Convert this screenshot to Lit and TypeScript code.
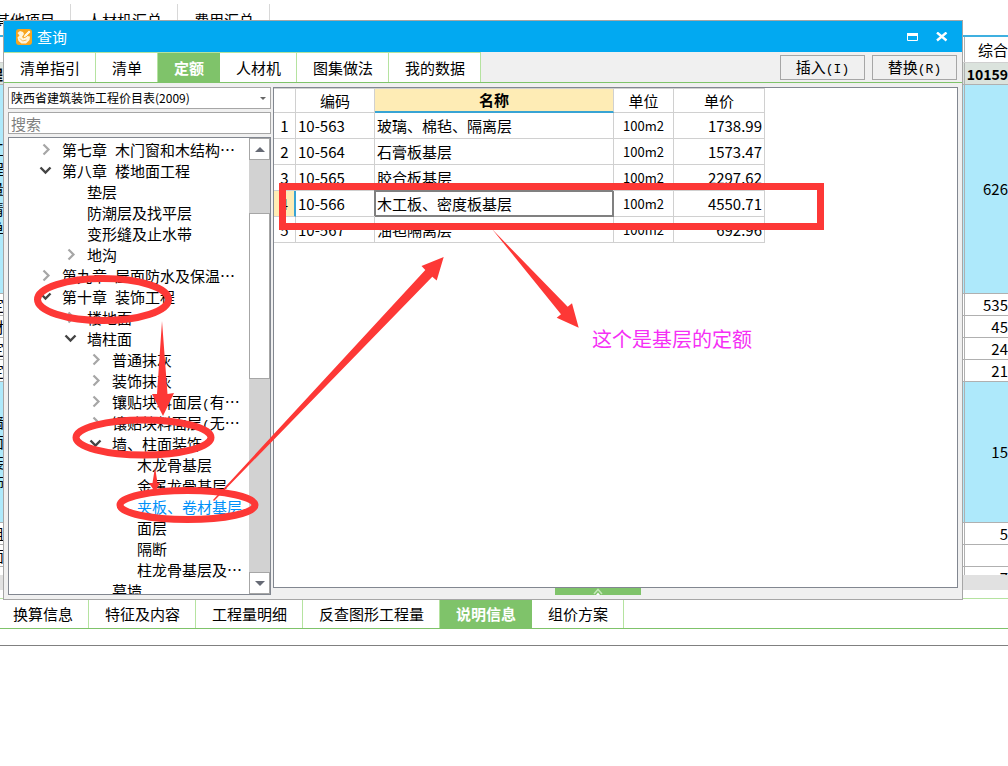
import { LitElement, html, css, svg, nothing } from "lit";
import { customElement, state } from "lit/decorators.js";
import { classMap } from "lit/directives/class-map.js";

interface Node {
  level: number;
  icon?: "open" | "closed";
  chapter?: string;
  text: string;
  latin?: string;
  rest?: string;
}

const TREE: Node[] = [
  { level: 1, icon: "closed", chapter: "第七章", text: "木门窗和木结构…" },
  { level: 1, icon: "open", chapter: "第八章", text: "楼地面工程" },
  { level: 2, text: "垫层" },
  { level: 2, text: "防潮层及找平层" },
  { level: 2, text: "变形缝及止水带" },
  { level: 2, icon: "closed", text: "地沟" },
  { level: 1, icon: "closed", chapter: "第九章", text: "屋面防水及保温…" },
  { level: 1, icon: "open", chapter: "第十章", text: "装饰工程" },
  { level: 2, icon: "closed", text: "楼地面" },
  { level: 2, icon: "open", text: "墙柱面" },
  { level: 3, icon: "closed", text: "普通抹灰" },
  { level: 3, icon: "closed", text: "装饰抹灰" },
  { level: 3, icon: "closed", text: "镶贴块料面层", latin: "(", rest: "有…" },
  { level: 3, icon: "closed", text: "镶贴块料面层", latin: "(", rest: "无…" },
  { level: 3, icon: "open", text: "墙、柱面装饰" },
  { level: 4, text: "木龙骨基层" },
  { level: 4, text: "金属龙骨基层" },
  { level: 4, text: "夹板、卷材基层" },
  { level: 4, text: "面层" },
  { level: 4, text: "隔断" },
  { level: 4, text: "柱龙骨基层及…" },
  { level: 3, text: "幕墙" },
];

const ITEMS = [
  ["10-563", "玻璃、棉毡、隔离层", "100m2", "1738.99"],
  ["10-564", "石膏板基层", "100m2", "1573.47"],
  ["10-565", "胶合板基层", "100m2", "2297.62"],
  ["10-566", "木工板、密度板基层", "100m2", "4550.71"],
  ["10-567", "油毡隔离层", "100m2", "692.96"],
];

const SHEET = [
  { kind: "head", left: "", right: "综合" },
  { kind: "sum", left: "程", right: "10159" },
  { kind: "tall", left: "工程量清单", right: "626" },
  { kind: "", left: "定", right: "535" },
  { kind: "", left: "材", right: "45" },
  { kind: "", left: "定", right: "24" },
  { kind: "", left: "定", right: "21" },
  { kind: "mid", left: "墙面装饰", right: "15" },
  { kind: "", left: "组", right: "5" },
  { kind: "", left: "面", right: "" },
  { kind: "cut", left: "", right: "7" },
];

@customElement("tab-strip")
export class TabStrip extends LitElement {
  static properties = { tabs: { attribute: false }, active: { type: Number } };
  declare tabs: string[];
  declare active: number;

  constructor() {
    super();
    this.tabs = [];
    this.active = -1;
  }

  static styles = css`
    :host {
      display: flex;
    }
    .tab {
      box-sizing: border-box;
      margin: 0;
      padding: 0 15px 0 16px;
      border: 0;
      border-right: 1px solid var(--divider, #b5e3a0);
      background: #fff;
      color: #000;
      font: inherit;
      white-space: nowrap;
    }
    .active {
      background: #7fc36a;
      color: #fff;
      font-weight: bold;
      border-right-color: #7fc36a;
    }
  `;

  render() {
    return this.tabs.map(
      (t, i) => html`<button
        class=${classMap({ tab: true, active: i === this.active })}
        @click=${() => (this.active = i)}
      >${t}</button>`
    );
  }
}

@customElement("app-root")
export class AppRoot extends LitElement {
  @state() private selectedNode = 17;
  @state() private selectedRow = 3;

  static styles = css`
    :host {
      display: block;
      position: relative;
      min-height: 100vh;
      overflow: hidden;
      background: #fff;
      color: #000;
      font: 15px/20px "Noto Sans CJK SC", sans-serif;
    }
    * {
      box-sizing: border-box;
    }
    .mono {
      font-family: "Liberation Mono", monospace;
      font-size: 13px;
      line-height: 1;
    }

    /* page behind the dialog */
    .top-tabs {
      --divider: #d8d8d8;
      height: 31px;
      margin: 4px 0 0 -21px;
    }
    .sheet {
      border-top: 2px solid #3fb0e0;
      height: 563px;
    }
    .line {
      display: flex;
      justify-content: space-between;
      height: 22px;
      border-bottom: 1px solid #b0b0b0;
      background: #fff;
    }
    .line.head {
      height: 26px;
      border-color: #d0d0d0;
    }
    .line.sum {
      background: #dbe3dd;
      font-size: 14px;
      font-weight: bold;
    }
    .line.tall,
    .line.mid {
      background: #aee9fb;
    }
    .line.tall {
      height: 209px;
    }
    .line.mid {
      height: 141px;
    }
    .line.cut {
      height: 8px;
      border: 0;
      overflow: hidden;
    }
    .left,
    .right {
      display: flex;
      align-items: center;
      justify-content: flex-end;
      overflow: hidden;
    }
    .left {
      width: 4px;
    }
    .left span {
      width: 15px;
      flex: none;
      overflow-wrap: anywhere;
    }
    .right {
      width: 44px;
      border-left: 1px solid #b0b0b0;
    }
    .cut .right {
      align-items: flex-start;
      padding-top: 1px;
    }
    .hscroll {
      height: 15px;
      background: #e1e1e1;
    }
    .bottom-tabs {
      height: 31px;
      border-top: 1px solid #b5e3a0;
      border-bottom: 1px solid #7fc36a;
    }
    .bottom-tabs tab-strip {
      height: 29px;
      margin-left: -3px;
    }
    .detail {
      margin-top: 16px;
      border-top: 1px solid #808080;
    }

    /* dialog */
    .dialog {
      position: absolute;
      left: 3px;
      right: 45px;
      top: 20px;
      height: 580px;
      display: flex;
      flex-direction: column;
      border: 1px solid #a6a6a6;
      background: #f0f0f0;
    }
    .title {
      display: flex;
      align-items: center;
      gap: 5px;
      height: 31px;
      padding: 0 14px 0 12px;
      background: #02a9f1;
      color: #fff;
    }
    .title h1 {
      flex: 1;
      margin: 0;
      font-size: 15px;
      font-weight: normal;
    }
    .title button {
      display: flex;
      margin: 0 0 0 12px;
      padding: 0;
      border: 0;
      background: none;
    }
    .bar {
      display: flex;
      align-items: center;
      gap: 7px;
      height: 31px;
      padding-right: 5px;
      border-bottom: 1px solid #7fc36a;
    }
    .bar tab-strip {
      align-self: stretch;
      margin-right: auto;
      border-top: 1px solid #b5e3a0;
    }
    .push {
      width: 85px;
      height: 25px;
      padding: 0;
      border: 1px solid #a6a6a6;
      background: #f0f0f0;
      color: #000;
      font: inherit;
      line-height: 20px;
    }
    .body {
      flex: 1;
      min-height: 0;
      display: flex;
      gap: 2px;
      padding: 4px;
    }
    .side {
      width: 263px;
      display: flex;
      flex-direction: column;
      gap: 3px;
    }
    .combo {
      display: grid;
      align-items: center;
    }
    .combo > * {
      grid-area: 1 / 1;
    }
    .combo svg {
      justify-self: end;
      margin-right: 5px;
      pointer-events: none;
    }
    .field {
      width: 100%;
      height: 22px;
      margin: 0;
      padding: 0 2px;
      border: 1px solid #a6a6a6;
      border-radius: 0;
      background: #fff;
      color: #000;
      font: inherit;
      appearance: none;
      outline: 0;
    }
    select.field {
      font-size: 12px;
    }
    .field::placeholder {
      color: #808080;
      opacity: 1;
    }
    .tree {
      flex: 1;
      min-height: 0;
      display: flex;
      border: 1px solid #828790;
      background: #fff;
    }
    .nodes {
      flex: 1;
      min-width: 0;
      margin: 0;
      padding: 1px 0 0;
      overflow: hidden;
      list-style: none;
    }
    .node {
      display: flex;
      align-items: center;
      height: 21px;
      white-space: nowrap;
    }
    .l1 {
      padding-left: 30px;
    }
    .l2 {
      padding-left: 55px;
    }
    .l3 {
      padding-left: 80px;
    }
    .l4 {
      padding-left: 105px;
    }
    .twist {
      flex: none;
      width: 14px;
      height: 14px;
      margin-right: 9px;
    }
    .chapter {
      margin-right: 8px;
    }
    .chosen {
      color: #0090f8;
    }
    .scroll {
      width: 21px;
      display: flex;
      flex-direction: column;
      background: #d2d2d2;
    }
    .arrow {
      height: 22px;
      padding: 0;
      border: 1px solid #a6a6a6;
      background: #fff;
      display: flex;
      align-items: center;
      justify-content: center;
    }
    .thumb {
      height: 166px;
      margin: 53px 0 auto;
      border: 1px solid #a6a6a6;
      background: #fff;
    }
    .main {
      flex: 1;
      min-width: 0;
      display: flex;
      flex-direction: column;
    }
    .pane {
      height: 501px;
      border: 1px solid #828790;
      background: #fff;
    }
    .handle {
      width: 86px;
      height: 7px;
      margin-left: 282px;
      padding: 0;
      border: 0;
      background: #7fc36a;
      display: flex;
      justify-content: center;
    }
    .items {
      width: 491px;
      table-layout: fixed;
      border-collapse: separate;
      border-spacing: 0;
    }
    .items th,
    .items td {
      height: 26px;
      padding: 0 2px;
      border: 0 solid #d0d0d0;
      border-width: 0 1px 1px 0;
      font-weight: normal;
      line-height: 20px;
      text-align: left;
      white-space: nowrap;
    }
    .items thead th {
      height: 25px;
      border-top-width: 1px;
      text-align: center;
    }
    .items thead .sorted {
      background: #feecb5;
      border-bottom: 2px solid #38a4d4;
      font-weight: bold;
    }
    .items .num {
      padding: 0;
      text-align: center;
    }
    .items .unit {
      font-size: 13px;
      text-align: center;
    }
    .items .price {
      text-align: right;
    }
    .items .current .num {
      background: #feecb5;
      border-right: 2px solid #38a4d4;
    }
    .items .current .name {
      border-color: #808080;
      box-shadow: inset 1px 1px #808080, inset -1px -1px #808080, -1px -1px #808080;
    }
    .c-num {
      width: 22px;
    }
    .c-code {
      width: 79px;
    }
    .c-name {
      width: 239px;
    }
    .c-unit {
      width: 60px;
    }
    .c-price {
      width: 91px;
    }

    /* hand-drawn marks over the window */
    .marks {
      position: absolute;
      left: 0;
      top: 0;
      pointer-events: none;
    }
    .remark {
      position: absolute;
      left: 592px;
      top: 325px;
      margin: 0;
      color: #f52ff5;
      font-size: 20px;
      line-height: 28px;
    }
  `;

  private twist(icon?: string) {
    return html`<svg class="twist" viewBox="0 0 14 14" fill="none">
      ${icon === "open"
        ? svg`<path d="M1.500 3.500 L6.500 8.500 L11.500 3.500" stroke="#444" stroke-width="2.400"/>`
        : icon === "closed"
        ? svg`<path d="M4.500 1.500 L9.500 6.500 L4.500 11.500" stroke="#a6a6a6" stroke-width="2.200"/>`
        : nothing}
    </svg>`;
  }

  render() {
    return html`
      <tab-strip class="top-tabs" .tabs=${["其他项目", "人材机汇总", "费用汇总"]}></tab-strip>
      <div class="sheet">
        ${SHEET.map(
          (r) => html`<div class="line ${r.kind}">
            <div class="left"><span>${r.left}</span></div>
            <div class="right">${r.right}</div>
          </div>`
        )}
        <div class="hscroll"></div>
      </div>
      <div class="bottom-tabs">
        <tab-strip
          .tabs=${["换算信息", "特征及内容", "工程量明细", "反查图形工程量", "说明信息", "组价方案"]}
          .active=${4}
        ></tab-strip>
      </div>
      <div class="detail"></div>

      <section class="dialog" role="dialog" aria-labelledby="caption">
        <header class="title">
          <svg width="16" height="16" viewBox="0 0 16 16">
            <rect width="16" height="16" rx="3" fill="#f8a51f" />
            <path d="M1.500 4 L4 2 L7 3 L8 5 L6 8 L8 9 L11 7 L14 7.500 L13.500 11 L10 14.500 L5.500 14.500 L2.500 12 L1.500 8.500 L3.500 6.500 Z" fill="#fff5dc" />
            <path d="M7 9 L8 6 L13 1 L15 3 L10 8 Z" fill="#fff5dc" stroke="#f8a51f" stroke-width=".8" />
            <path d="M4 9.500 L6.500 12 L10.500 11" stroke="#f3b75a" fill="none" />
          </svg>
          <h1 id="caption">查询</h1>
          <button aria-label="最大化">
            <svg width="12" height="10" viewBox="0 0 12 10">
              <path d="M.5 1.500 H10.500 V8.500 H.5 Z" fill="none" stroke="#fff" />
              <path d="M0 1 H11 V4 H0 Z" fill="#fff" />
            </svg>
          </button>
          <button aria-label="关闭">
            <svg width="12" height="10" viewBox="0 0 12 10">
              <path d="M1 .5 L10.500 8.500 M10.500 .5 L1 8.500" stroke="#fff" stroke-width="2.400" />
            </svg>
          </button>
        </header>
        <div class="bar">
          <tab-strip
            .tabs=${["清单指引", "清单", "定额", "人材机", "图集做法", "我的数据"]}
            .active=${2}
          ></tab-strip>
          <button class="push">插入<span class="mono">(I)</span></button>
          <button class="push">替换<span class="mono">(R)</span></button>
        </div>
        <div class="body">
          <div class="side">
            <div class="combo">
              <select class="field" aria-label="定额库">
                <option>陕西省建筑装饰工程价目表(2009)</option>
              </select>
              <svg width="6" height="3" viewBox="0 0 6 3"><path d="M0 0 H6 L3 3 Z" fill="#666" /></svg>
            </div>
            <input class="field" type="text" placeholder="搜索" aria-label="搜索" />
            <div class="tree">
              <ul class="nodes">
                ${TREE.map(
                  (n, i) => html`<li
                    class="node l${n.level} ${i === this.selectedNode ? "chosen" : ""}"
                    @click=${() => (this.selectedNode = i)}
                  >
                    ${this.twist(n.icon)}${n.chapter
                      ? html`<span class="chapter">${n.chapter}</span>`
                      : nothing}<span>${n.text}${n.latin
                      ? html`<span class="mono">${n.latin}</span>`
                      : nothing}${n.rest ?? ""}</span>
                  </li>`
                )}
              </ul>
              <div class="scroll">
                <button class="arrow" aria-label="向上">
                  <svg width="10" height="5" viewBox="0 0 10 5"><path d="M0 5 L5 0 L10 5 Z" fill="#666a75" /></svg>
                </button>
                <div class="thumb"></div>
                <button class="arrow" aria-label="向下">
                  <svg width="10" height="5" viewBox="0 0 10 5"><path d="M0 0 L5 5 L10 0 Z" fill="#666a75" /></svg>
                </button>
              </div>
            </div>
          </div>
          <div class="main">
            <div class="pane">
              <table class="items">
                <colgroup>
                  <col class="c-num" /><col class="c-code" /><col class="c-name" /><col class="c-unit" /><col class="c-price" />
                </colgroup>
                <thead>
                  <tr>
                    <th></th>
                    <th>编码</th>
                    <th class="sorted">名称</th>
                    <th>单位</th>
                    <th>单价</th>
                  </tr>
                </thead>
                <tbody>
                  ${ITEMS.map(
                    ([code, name, unit, price], i) => html`<tr
                      class=${classMap({ current: i === this.selectedRow })}
                      @click=${() => (this.selectedRow = i)}
                    >
                      <th class="num">${i + 1}</th>
                      <td>${code}</td>
                      <td class="name">${name}</td>
                      <td class="unit">${unit}</td>
                      <td class="price">${price}</td>
                    </tr>`
                  )}
                </tbody>
              </table>
            </div>
            <button class="handle" aria-label="展开">
              <svg width="10" height="7" viewBox="0 0 10 7" fill="none">
                <path d="M1 6 L5 1.500 L9 6" stroke="#c4e8b8" stroke-width="1.500" />
                <path d="M3 7 L5 4.500 L7 7 Z" fill="#fff" />
              </svg>
            </button>
          </div>
        </div>
      </section>

      <svg class="marks" width="1008" height="766" viewBox="0 0 1008 766">
        <g fill="none" stroke="#fd3836" stroke-width="7">
          <rect x="282.500" y="186.500" width="538" height="40" />
          <ellipse cx="103" cy="299.500" rx="65.500" ry="21" />
          <ellipse cx="143.500" cy="437.500" rx="67.500" ry="17.500" />
          <ellipse cx="187.500" cy="505" rx="67.500" ry="14.500" />
        </g>
        <g fill="#fd3836">
          <path d="M162 321 L167.500 394 L174 393 L163 416 L152 394 L157 394 Z" />
          <path d="M155 467 L157.500 483 L160.500 482 L155 492 L149 483 L152.500 483 Z" />
          <path d="M213 500 L425.300 270 L421.500 266 L443.700 257 L436.700 280.500 L432.300 276.700 L214 501 Z" />
          <path d="M492 229 L567.700 306.700 L572 303.300 L578.700 327.700 L556.700 317.700 L561 314.300 Z" />
        </g>
      </svg>
      <p class="remark">这个是基层的定额</p>
    `;
  }
}
